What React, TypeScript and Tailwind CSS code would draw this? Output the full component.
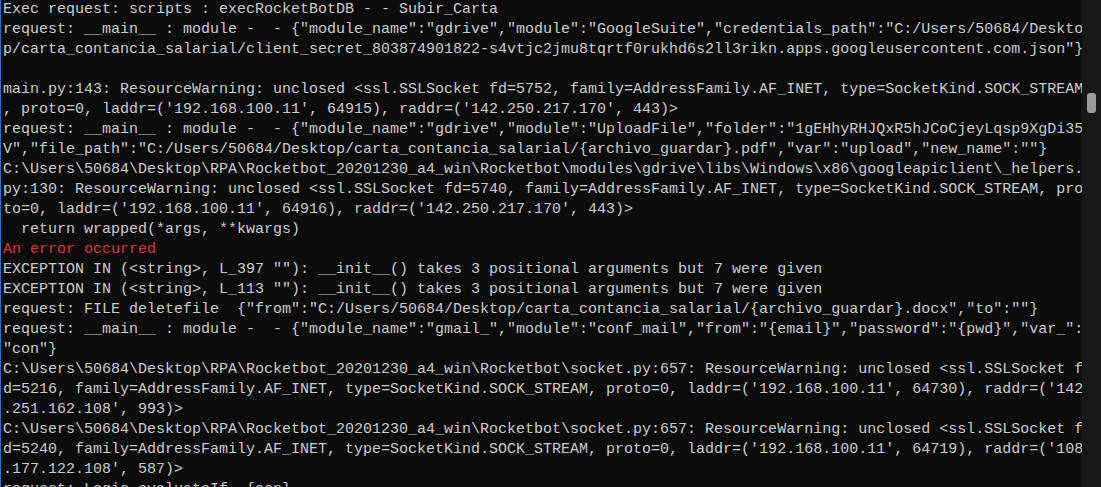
const lines: { text: string; red?: boolean }[] = [
  { text: "Exec request: scripts : execRocketBotDB - - Subir_Carta" },
  { text: 'request: __main__ : module -  - {"module_name":"gdrive","module":"GoogleSuite","credentials_path":"C:/Users/50684/Deskto' },
  { text: 'p/carta_contancia_salarial/client_secret_803874901822-s4vtjc2jmu8tqrtf0rukhd6s2ll3rikn.apps.googleusercontent.com.json"}' },
  { text: "" },
  { text: "main.py:143: ResourceWarning: unclosed <ssl.SSLSocket fd=5752, family=AddressFamily.AF_INET, type=SocketKind.SOCK_STREAM" },
  { text: ", proto=0, laddr=('192.168.100.11', 64915), raddr=('142.250.217.170', 443)>" },
  { text: 'request: __main__ : module -  - {"module_name":"gdrive","module":"UploadFile","folder":"1gEHhyRHJQxR5hJCoCjeyLqsp9XgDi35' },
  { text: 'V","file_path":"C:/Users/50684/Desktop/carta_contancia_salarial/{archivo_guardar}.pdf","var":"upload","new_name":""}' },
  { text: "C:\\Users\\50684\\Desktop\\RPA\\Rocketbot_20201230_a4_win\\Rocketbot\\modules\\gdrive\\libs\\Windows\\x86\\googleapiclient\\_helpers." },
  { text: "py:130: ResourceWarning: unclosed <ssl.SSLSocket fd=5740, family=AddressFamily.AF_INET, type=SocketKind.SOCK_STREAM, pro" },
  { text: "to=0, laddr=('192.168.100.11', 64916), raddr=('142.250.217.170', 443)>" },
  { text: "  return wrapped(*args, **kwargs)" },
  { text: "An error occurred", red: true },
  { text: 'EXCEPTION IN (<string>, L_397 ""): __init__() takes 3 positional arguments but 7 were given' },
  { text: 'EXCEPTION IN (<string>, L_113 ""): __init__() takes 3 positional arguments but 7 were given' },
  { text: 'request: FILE deletefile  {"from":"C:/Users/50684/Desktop/carta_contancia_salarial/{archivo_guardar}.docx","to":""}' },
  { text: 'request: __main__ : module -  - {"module_name":"gmail_","module":"conf_mail","from":"{email}","password":"{pwd}","var_":' },
  { text: '"con"}' },
  { text: "C:\\Users\\50684\\Desktop\\RPA\\Rocketbot_20201230_a4_win\\Rocketbot\\socket.py:657: ResourceWarning: unclosed <ssl.SSLSocket f" },
  { text: "d=5216, family=AddressFamily.AF_INET, type=SocketKind.SOCK_STREAM, proto=0, laddr=('192.168.100.11', 64730), raddr=('142" },
  { text: ".251.162.108', 993)>" },
  { text: "C:\\Users\\50684\\Desktop\\RPA\\Rocketbot_20201230_a4_win\\Rocketbot\\socket.py:657: ResourceWarning: unclosed <ssl.SSLSocket f" },
  { text: "d=5240, family=AddressFamily.AF_INET, type=SocketKind.SOCK_STREAM, proto=0, laddr=('192.168.100.11', 64719), raddr=('108" },
  { text: ".177.122.108', 587)>" },
  { text: "request: Logic evaluateIf  {con}" },
];

export default function App() {
  return (
    <div className="w-[1101px] h-[487px] overflow-hidden bg-[#0c0c0c] flex border-l border-[#2f6fc0]">
      <div className="flex-1 overflow-hidden pl-[2px] font-['Liberation_Mono',monospace] text-[15px] leading-[20px] text-[#cccccc]">
        {lines.map((l, i) => (
          <div
            key={i}
            className={"whitespace-pre h-[20px] " + (l.red ? "text-[#e3303f]" : "")}
          >
            {l.text}
          </div>
        ))}
      </div>
      <div className="w-[19px] h-full bg-[#171717] flex flex-col items-center pt-[93px]">
        <div className="w-[9px] h-[20px] rounded-[3px] bg-[#9a9a9a]" />
      </div>
    </div>
  );
}
